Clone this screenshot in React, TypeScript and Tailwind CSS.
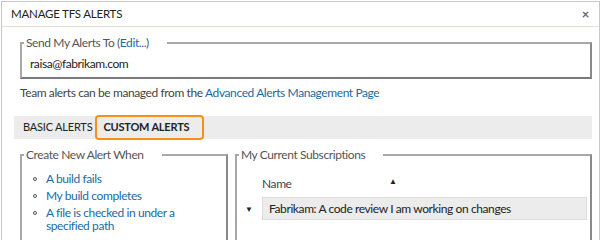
import React from "react"

const font = { fontFamily: 'Lato, "Segoe UI", sans-serif', letterSpacing: "-0.4px" }

const alertTypes = [
  "A build fails",
  "My build completes",
  "A file is checked in under a specified path",
]

const Legend: React.FC<{ children: React.ReactNode }> = ({ children }) => (
  <legend className="ml-[2px] pl-[2px] pr-[18px] text-[12px] leading-[14px] text-[#555]">
    {children}
  </legend>
)

const App: React.FC = () => {
  return (
    <div className="h-[240px] w-[602px] overflow-hidden bg-white text-[#222]" style={font}>
      <div className="ml-px mt-px h-[260px] w-[599px] border border-[#c8c8c8] bg-white">
        {/* title bar */}
        <div className="flex h-[25px] items-center justify-between border-b border-[#e8dfcc] pl-[9px] pr-[10px]">
          <span className="text-[11.5px] tracking-[-0.2px] text-[#222]">MANAGE TFS ALERTS</span>
          <span className="text-[13px] font-bold leading-none text-[#666]">×</span>
        </div>

        <div className="pl-[12px] pr-[7px]">
          <fieldset className="ml-[6px] mt-[9px] h-[43px] border-2 border-[#a8a8a8] border-b-[#7a7a7a] border-r-[#8a8a8a]">
            <Legend>
              Send My Alerts To (<a className="text-[#1a6aa5]">Edit...</a>)
            </Legend>
            <div className="pl-[8px] pt-[7px] text-[12px] leading-[14px]">raisa@fabrikam.com</div>
          </fieldset>

          <p className="ml-[6px] mt-[7px] text-[12px] leading-[14px] text-[#444]">
            Team alerts can be managed from the{" "}
            <a className="text-[#1a6aa5]">Advanced Alerts Management Page</a>
          </p>

          {/* tabs */}
          <div className="mt-[16px] flex h-[23px] items-center bg-[#ececec] pl-[9px] text-[11px] tracking-[-0.2px]">
            <span className="text-[#222]">BASIC ALERTS</span>
            <span className="ml-[3px] flex h-[25px] items-center rounded-[4px] border-[2px] border-[#f5901f] pl-[6px] pr-[13px] font-bold text-[#222]">
              CUSTOM ALERTS
            </span>
          </div>

          <div className="mt-[9px] flex gap-[7px]">
            <fieldset className="ml-[6px] h-[100px] w-[208px] border-2 border-[#a8a8a8] border-r-[#8a8a8a]">
              <Legend>Create New Alert When</Legend>
              <ul className="mt-[10px] pl-[11px] pr-[8px] text-[12px] text-[#1a6aa5]">
                {alertTypes.map((t) => (
                  <li key={t} className="mb-[4px] flex items-start gap-[9px] leading-[13px]">
                    <span className="mt-[5px] h-[4px] w-[4px] shrink-0 rounded-full border border-[#555]" />
                    <span className="w-[150px]">{t}</span>
                  </li>
                ))}
              </ul>
            </fieldset>

            <fieldset className="h-[100px] flex-1 border-2 border-[#a8a8a8] border-r-[#8a8a8a]">
              <Legend>My Current Subscriptions</Legend>
              <div className="relative pl-[25px] pt-[15px] text-[12px] leading-[14px]">
                <span className="text-[#444]">Name</span>
                <span className="absolute left-[152px] top-[12px] text-[8px] text-[#222]">▲</span>
              </div>
              <div className="mt-[6px] flex items-center">
                <span className="w-[25px] pl-[8px] text-[8px] text-[#222]">▼</span>
                <div className="flex h-[23px] w-[325px] items-center border border-[#dcdcdc] bg-[#ececec] pl-[6px] text-[12px] text-[#222]">
                  Fabrikam: A code review I am working on changes
                </div>
              </div>
            </fieldset>
          </div>
        </div>
      </div>
    </div>
  )
}

export default App
